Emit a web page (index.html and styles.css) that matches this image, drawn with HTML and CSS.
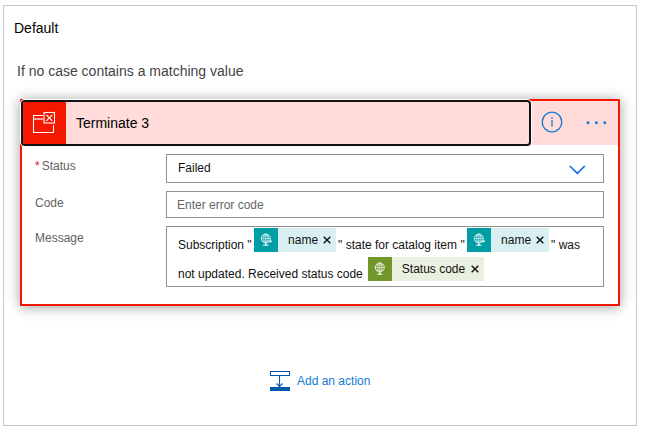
FILE: index.html
```html
<!DOCTYPE html>
<html lang="en">
<head>
<meta charset="utf-8">
<title>Default case</title>
<link rel="stylesheet" href="styles.css">
</head>
<body>
<svg class="defs" width="0" height="0">
  <symbol id="globe" viewBox="0 0 24 24">
    <g fill="none" stroke="currentColor" stroke-width=".6">
      <circle cx="11.800" cy="10.500" r="4.500" stroke-width=".8"/>
      <ellipse cx="11.800" cy="10.500" rx="2.100" ry="4.500"/>
      <path d="M11.800 6v10.500M7.300 10.500h9M8.200 8h7.200M8.200 13h7.200"/>
      <path d="M8.800 17.200h6" stroke-width=".8"/>
    </g>
    <circle cx="11.800" cy="17" r="1" fill="currentColor"/>
  </symbol>
</svg>
<section class="case">
  <h1 class="case-title">Default</h1>
  <p class="case-note">If no case contains a matching value</p>
  <article class="card">
    <header class="card-head">
      <div class="card-name">
        <span class="card-icon">
          <svg width="24" height="24" viewBox="0 0 24 24" fill="none" stroke="#fff">
            <path d="M11 4.500H1.500v17h20V14" stroke-width="1.100"/>
            <path d="M2 8h9" stroke-width="2" opacity=".6"/>
            <rect x="12" y="1.500" width="10.500" height="10.500" stroke-width="1.100"/>
            <path d="M14.300 3.800l6 6M20.300 3.800l-6 6" stroke-width="1.200"/>
          </svg>
        </span>
        <span>Terminate 3</span>
      </div>
      <svg class="info" width="22" height="22" viewBox="0 0 22 22">
        <circle cx="11" cy="11" r="9.800" fill="none" stroke="#0f78d4" stroke-width="1.300"/>
        <path d="M11 9v6.500" stroke="#0f78d4" stroke-width="1.300"/>
        <circle cx="11" cy="6.800" r=".9" fill="#0f78d4"/>
      </svg>
      <svg class="more" width="22" height="4" viewBox="0 0 22 4" fill="#0f78d4">
        <circle cx="2" cy="1.700" r="1.450"/><circle cx="10.400" cy="1.700" r="1.450"/><circle cx="18.800" cy="1.700" r="1.450"/>
      </svg>
    </header>
    <div class="fields">
      <label class="label"><span class="required">*</span>Status</label>
      <div class="field select">
        <span>Failed</span>
        <svg width="18" height="10" viewBox="0 0 18 10" fill="none" stroke="#1066e8" stroke-width="1.600"><path d="M1.800 1L9.300 8.300 16.800 1"/></svg>
      </div>
      <label class="label">Code</label>
      <div class="field code">Enter error code</div>
      <label class="label">Message</label>
      <div class="field message">
        <div class="line">
          <span class="text">Subscription "</span>
          <span class="token teal"><svg class="token-icon" viewBox="0 0 24 24"><use href="#globe"/><path d="M15.500 12l3.200 1.300-3.200 1.500z" fill="currentColor"/></svg><span class="token-name">name</span><svg class="close" viewBox="0 0 8 8"><path d="M.7.7l6.600 6.600M7.300.7L.7 7.300"/></svg></span>
          <span class="text">" state for catalog item "</span>
          <span class="token teal"><svg class="token-icon" viewBox="0 0 24 24"><use href="#globe"/><path d="M15.500 12l3.200 1.300-3.200 1.500z" fill="currentColor"/></svg><span class="token-name">name</span><svg class="close" viewBox="0 0 8 8"><path d="M.7.7l6.600 6.600M7.300.7L.7 7.300"/></svg></span>
          <span class="text">" was</span>
        </div>
        <div class="line">
          <span class="text second">not updated. Received status code</span>
          <span class="token green"><svg class="token-icon" viewBox="0 0 24 24"><use href="#globe"/></svg><span class="token-name">Status code</span><svg class="close" viewBox="0 0 8 8"><path d="M.7.7l6.600 6.600M7.300.7L.7 7.300"/></svg></span>
        </div>
      </div>
    </div>
  </article>
  <div class="add">
    <svg width="20" height="20" viewBox="0 0 20 20" fill="none" stroke="#0058ad">
      <rect x=".5" y=".5" width="19" height="4"/>
      <path d="M9.500 5v10.500M6.500 12.500l3 3 3-3" stroke-width="1.100"/>
      <path d="M0 18h20" stroke-width="4"/>
    </svg>
    <span>Add an action</span>
  </div>
</section>
</body>
</html>
```

FILE: styles.css
```css
* { box-sizing: border-box; }
body {
  margin: 0;
  padding: 5px 0 0 3px;
  background: #fff;
  font: 12px/16px "Liberation Sans", Arial, sans-serif;
  color: #111;
}
svg { display: block; flex: none; }
.defs { position: absolute; }
.case {
  width: 634px;
  height: 421px;
  border: 1px solid #c8c8c8;
  padding: 14px 16px 0;
}
.case-title {
  margin: 0 0 0 -6px;
  font-size: 14px;
  line-height: 16px;
  font-weight: 400;
  color: #000;
}
.case-note {
  margin: 27px 0 20px -3px;
  font-size: 14px;
  line-height: 16px;
  color: #444;
}
.card {
  width: 600px;
  height: 207px;
  border: 2px solid #f51800;
  background: #fff;
  box-shadow: 0 1px 12px rgba(0, 0, 0, .38);
}
.card-head {
  display: flex;
  align-items: center;
  height: 44px;
  background: #ffdcda;
}
.card-name {
  display: flex;
  align-items: center;
  flex: none;
  width: 510px;
  height: 46px;
  margin-left: -1px;
  border: 2px solid #111;
  border-radius: 4px;
  box-shadow: 0 0 0 1px #fff;
  background: #ffdcda;
  overflow: hidden;
  font-size: 14px;
  color: #000;
}
.card-icon {
  display: flex;
  align-items: center;
  width: 43px;
  height: 42px;
  padding-left: 9px;
  margin-right: 10px;
  background: #f51800;
}
.info { margin: -2px 0 0 10px; }
.more { margin-left: 23px; }
.fields {
  display: grid;
  grid-template-columns: 131px 438px;
  grid-template-rows: 29px 27px 61px;
  row-gap: 8px;
  padding: 9px 0 0 13px;
}
.label { padding-top: 4px; color: #5f5f5f; }
.required { margin-right: 2px; color: #e81123; }
.field { border: 1px solid #919191; background: #fff; }
.select {
  display: flex;
  align-items: center;
  justify-content: space-between;
  padding: 0 17px 2px 11px;
}
.select svg { margin-top: 4px; }
.code { padding: 5px 10px; color: #666; }
.message { padding: 1px 0 0 11px; }
.line { display: flex; height: 29px; white-space: pre; }
.text { padding-top: 9px; }
.token {
  display: flex;
  height: 24px;
  margin: 0 2px;
  padding-right: 5px;
}
.text + .token { margin-left: 2.4px; }
.second + .token { margin-left: 5px; }
.token-icon { width: 24px; height: 24px; color: #fff; }
.teal { background: #d9eff2; }
.teal .token-icon { background: #009da5; }
.green { background: #e9f0df; }
.green .token-icon { background: #709727; }
.token-name { margin: 4px 6px 0 10px; }
.teal .token-name { margin-right: 5px; }
.close {
  width: 8px;
  height: 8px;
  margin-top: 8px;
  fill: none;
  stroke: #111;
  stroke-width: 1.4;
}
.add {
  display: flex;
  align-items: center;
  gap: 7px;
  margin: 65px 0 0 250px;
  color: #147bd3;
}
```
